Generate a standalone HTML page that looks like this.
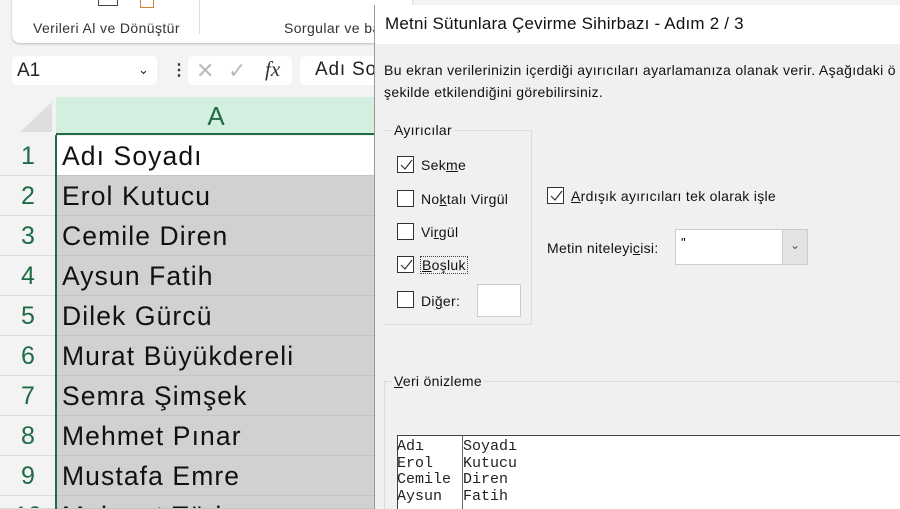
<!DOCTYPE html>
<html><head><meta charset="utf-8"><style>
*{margin:0;padding:0;box-sizing:border-box}
html,body{width:900px;height:509px;overflow:hidden}
body{background:#f3f3f3;font-family:"Liberation Sans",sans-serif;position:relative}
.a{position:absolute}
.rn{position:absolute;left:0;width:56px;height:40px;text-align:center;font-size:25px;color:#1e6b45;line-height:40px;border-bottom:1px solid #dcdcdc;background:#f3f3f3;overflow:hidden}
.cell{position:absolute;left:57px;width:318px;height:40px;font-size:26.5px;letter-spacing:1.1px;line-height:40px;padding-left:5px;background:#d1d1d1;border-bottom:1px solid #c4c4c4;color:#111;white-space:nowrap;overflow:hidden}
.cb{position:absolute;width:17px;height:17px;border:1px solid #333;background:#fff}
.cb svg{position:absolute;left:1px;top:1px}
.lbl{position:absolute;font-size:14px;letter-spacing:0.3px;color:#111;white-space:nowrap}
u{text-decoration:underline}
.mono{font-family:"Liberation Mono",monospace;font-size:15px;line-height:16.7px;color:#222}
</style></head><body>
<div class="a" style="left:12px;top:-10px;width:400px;height:53px;background:#fff;border-radius:8px;box-shadow:0 1px 2px #bbb"></div>
<div class="a" style="left:33px;top:20px;font-size:14px;letter-spacing:0.4px;color:#333">Verileri Al ve Dönüştür</div>
<div class="a" style="left:199px;top:0;width:1px;height:34px;background:#ddd"></div>
<div class="a" style="left:284px;top:20px;font-size:14px;letter-spacing:0.4px;color:#333">Sorgular ve ba</div>
<div class="a" style="left:98px;top:0;width:20px;height:6px;border:1px solid #444;border-top:none"></div>
<div class="a" style="left:140px;top:0;width:14px;height:8px;border:1px solid #d08030;border-top:none"></div>
<div class="a" style="left:12px;top:56px;width:145px;height:29px;background:#fff;border-radius:5px"></div>
<div class="a" style="left:17px;top:60px;font-size:19px;color:#222">A1</div>
<div class="a" style="left:138px;top:62px;font-size:13px;color:#222">⌄</div>
<div class="a" style="left:171px;top:60px;font-size:16px;color:#333;font-weight:bold">⋮</div>
<div class="a" style="left:188px;top:56px;width:104px;height:29px;background:#fff;border-radius:5px"></div>
<div class="a" style="left:196px;top:58px;font-size:22px;color:#bbb">✕</div>
<div class="a" style="left:228px;top:58px;font-size:22px;color:#bbb">✓</div>
<div class="a" style="left:265px;top:57px;font-size:21px;font-family:'Liberation Serif',serif;font-style:italic;color:#333">fx</div>
<div class="a" style="left:300px;top:56px;width:80px;height:29px;background:#fff;border-radius:5px"></div>
<div class="a" style="left:315px;top:59px;font-size:19px;letter-spacing:0.8px;color:#222">Adı So</div>
<div class="a" style="left:0;top:97px;width:56px;height:38px;background:#f3f3f3"></div>
<div class="a" style="left:20px;top:102px;width:0;height:0;border-left:32px solid transparent;border-bottom:30px solid #dedede"></div>
<div class="a" style="left:56px;top:97px;width:320px;height:38px;background:#d3efdf;border-bottom:2px solid #1e6b45;text-align:center;font-size:26px;line-height:38px;color:#1e6b45">A</div>
<div class="rn" style="top:136px">1</div><div class="rn" style="top:176px">2</div><div class="rn" style="top:216px">3</div><div class="rn" style="top:256px">4</div><div class="rn" style="top:296px">5</div><div class="rn" style="top:336px">6</div><div class="rn" style="top:376px">7</div><div class="rn" style="top:416px">8</div><div class="rn" style="top:456px">9</div><div class="rn" style="top:496px;height:13px;line-height:40px">10</div>
<div class="cell" style="top:136px;background:#fff">Adı Soyadı</div>
<div class="cell" style="top:176px">Erol Kutucu</div>
<div class="cell" style="top:216px">Cemile Diren</div>
<div class="cell" style="top:256px">Aysun Fatih</div>
<div class="cell" style="top:296px">Dilek Gürcü</div>
<div class="cell" style="top:336px">Murat Büyükdereli</div>
<div class="cell" style="top:376px">Semra Şimşek</div>
<div class="cell" style="top:416px">Mehmet Pınar</div>
<div class="cell" style="top:456px">Mustafa Emre</div>
<div class="cell" style="top:496px;height:13px">Mehmet Türk</div>
<div class="a" style="left:55px;top:135px;width:2px;height:374px;background:#1e6b45"></div>
<div class="a" style="left:374px;top:5px;width:526px;height:504px;background:#f0f0f0;border-left:1px solid #999"></div>
<div class="a" style="left:375px;top:5px;width:525px;height:39px;background:#fff"></div>
<div class="a" style="left:385px;top:14px;font-size:17px;letter-spacing:0.2px;color:#111;white-space:nowrap">Metni Sütunlara Çevirme Sihirbazı - Adım 2 / 3</div>
<div class="a" style="left:384px;top:59px;width:516px;overflow:hidden;font-size:14px;letter-spacing:0.35px;color:#111;line-height:22px;white-space:nowrap">Bu ekran verilerinizin içerdiği ayırıcıları ayarlamanıza olanak verir. Aşağıdaki ö<br>şekilde etkilendiğini görebilirsiniz.</div>
<div class="a" style="left:384px;top:130px;width:148px;height:195px;border:1px solid #dcdcdc;border-left:none"></div>
<div class="lbl" style="left:392px;top:122px;background:#f0f0f0;padding:0 2px">Ayırıcılar</div>
<div class="cb" style="left:397px;top:156px"><svg width="14" height="14"><path d="M2 7 L6 11 L13 2" stroke="#333" fill="none" stroke-width="1.2"/></svg></div>
<div class="lbl" style="left:421px;top:157px">Sek<u>m</u>e</div>
<div class="cb" style="left:397px;top:190px"></div>
<div class="lbl" style="left:421px;top:191px">No<u>k</u>talı Virgül</div>
<div class="cb" style="left:397px;top:223px"></div>
<div class="lbl" style="left:421px;top:224px">Vi<u>r</u>gül</div>
<div class="cb" style="left:397px;top:256px"><svg width="14" height="14"><path d="M2 7 L6 11 L13 2" stroke="#333" fill="none" stroke-width="1.2"/></svg></div>
<div class="lbl" style="left:420px;top:256px;border:1px dotted #444;padding:0 1px"><u>B</u>oşluk</div>
<div class="cb" style="left:397px;top:291px"></div>
<div class="lbl" style="left:421px;top:293px">Di<u>ğ</u>er:</div>
<div class="a" style="left:477px;top:284px;width:44px;height:33px;background:#fff;border:1px solid #ccc"></div>
<div class="cb" style="left:547px;top:187px"><svg width="14" height="14"><path d="M2 7 L6 11 L13 2" stroke="#333" fill="none" stroke-width="1.2"/></svg></div>
<div class="lbl" style="left:571px;top:188px"><u>A</u>rdışık ayırıcıları tek olarak işle</div>
<div class="lbl" style="left:547px;top:240px">Metin niteleyi<u>c</u>isi:</div>
<div class="a" style="left:675px;top:229px;width:133px;height:36px;background:#fff;border:1px solid #ccc"></div>
<div class="a" style="left:681px;top:235px;font-size:13px">"</div>
<div class="a" style="left:782px;top:230px;width:25px;height:34px;background:#e3e3e3;border-left:1px solid #ccc;text-align:center;font-size:12px;line-height:30px;color:#555">⌄</div>
<div class="a" style="left:384px;top:381px;width:516px;height:1px;background:#dcdcdc"></div>
<div class="a" style="left:384px;top:381px;width:1px;height:128px;background:#dcdcdc"></div>
<div class="lbl" style="left:392px;top:373px;background:#f0f0f0;padding:0 2px"><u>V</u>eri önizleme</div>
<div class="a" style="left:397px;top:435px;width:503px;height:74px;background:#fff;border-top:1px solid #444;border-left:1px solid #444"></div>
<div class="a" style="left:462px;top:436px;width:1px;height:73px;background:#666"></div>
<div class="a mono" style="left:397px;top:439px">Adı<br>Erol<br>Cemile<br>Aysun</div>
<div class="a mono" style="left:463px;top:439px">Soyadı<br>Kutucu<br>Diren<br>Fatih</div>
</body></html>
